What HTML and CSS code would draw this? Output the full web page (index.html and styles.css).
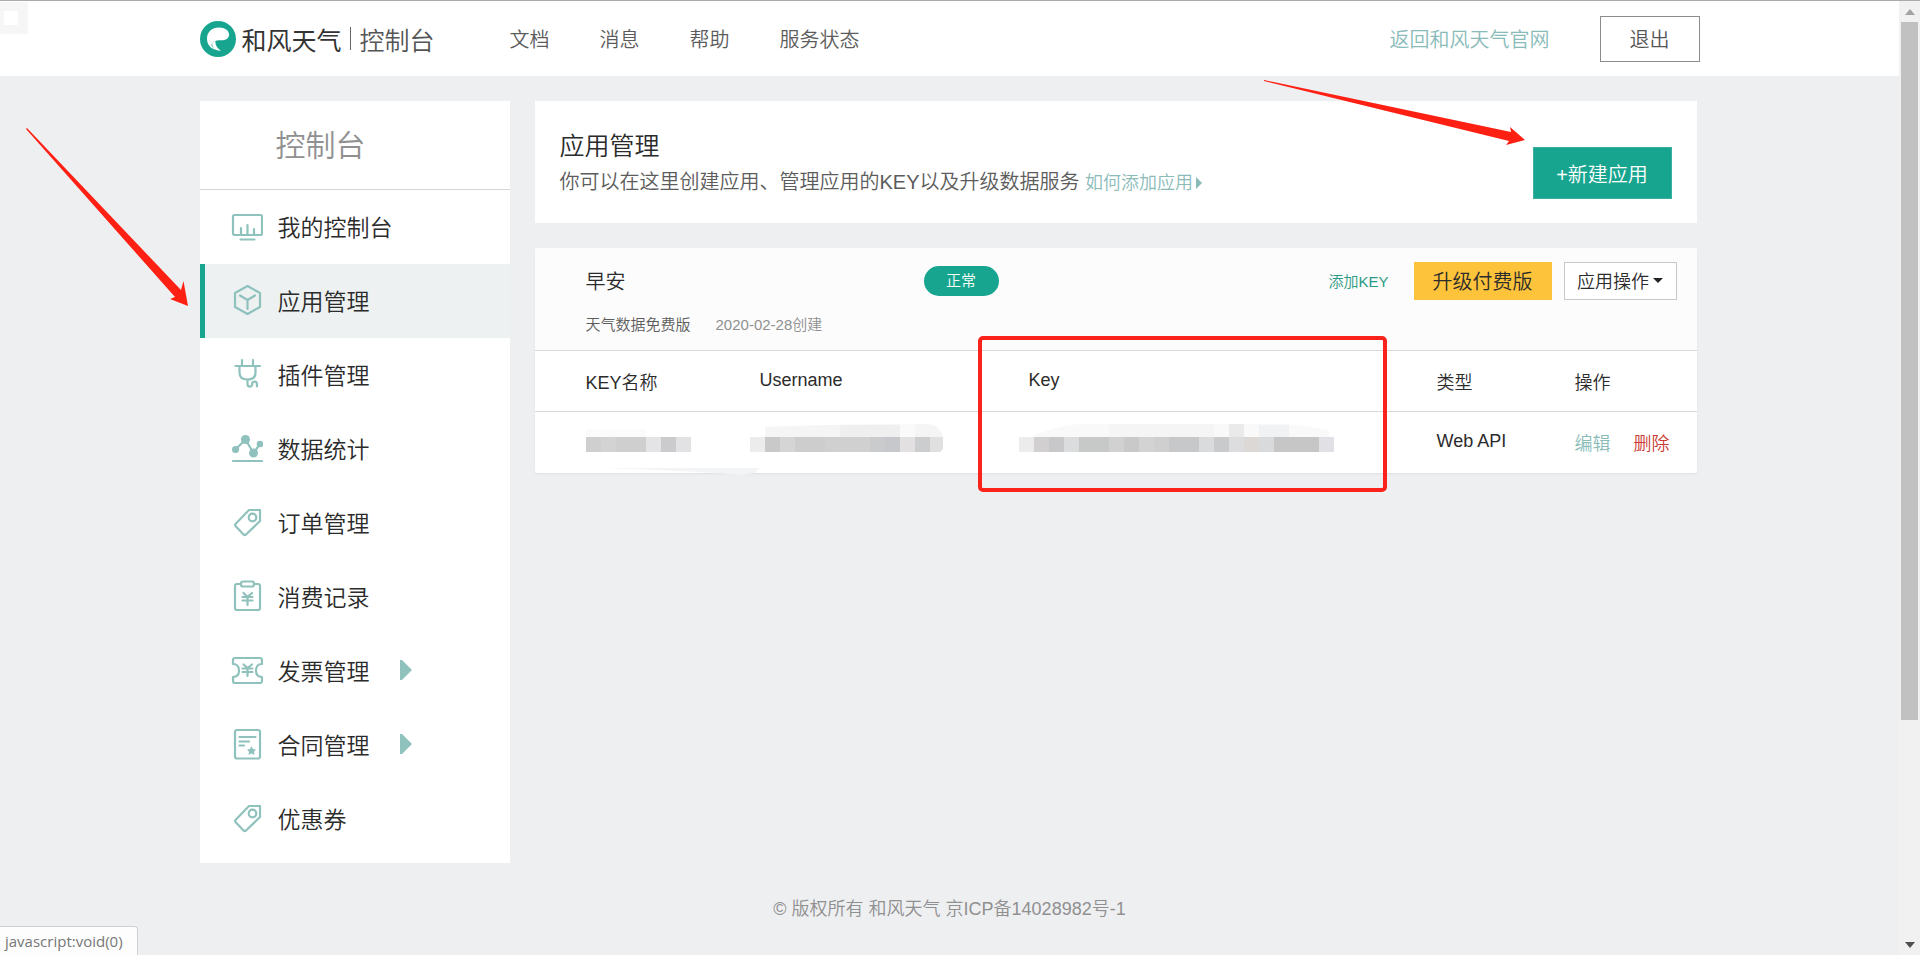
FILE: index.html
```html
<!DOCTYPE html>
<html lang="zh-CN">
<head>
<meta charset="utf-8">
<title>应用管理 - 和风天气控制台</title>
<link rel="stylesheet" href="styles.css">
</head>
<body>
<div class="window">
  <div class="page">
    <header class="topbar">
      <div class="container topbar-inner">
        <a class="brand" href="#">
          <svg class="brand-mark" viewBox="0 0 36 36" aria-hidden="true">
            <circle cx="18" cy="18" r="18" fill="#18a590"/>
            <path d="M17 29C11 28 7 24 7 17.500C7 11 12 6.500 19 6.500C25 6.500 29 9.500 29 13.500C29 17.500 26 19.300 21 19.300C15 19.300 11.500 21 11.500 24.500C12.500 26.500 14.500 28.300 17 29Z" fill="#fff"/>
            <path d="M12.500 25C11.500 21.500 13 20.300 15.500 20.200C15 24 17.500 27.500 21 29.600C17 30 13.500 28 12.500 25Z" fill="#fff"/>
          </svg>
          <span class="brand-name">和风天气</span>
          <span class="brand-bar"></span>
          <span class="brand-sub">控制台</span>
        </a>
        <nav class="topnav">
          <a href="#">文档</a>
          <a href="#">消息</a>
          <a href="#">帮助</a>
          <a href="#">服务状态</a>
        </nav>
        <a class="home-link" href="#">返回和风天气官网</a>
        <button class="logout" type="button">退出</button>
      </div>
    </header>

    <div class="container body-row">
      <aside class="sidebar">
        <h2 class="side-title">控制台</h2>
        <nav class="side-nav">
          <a class="side-item" href="#">
            <svg class="icon" viewBox="0 0 32 32"><rect x="2" y="5" width="29" height="20" rx="1.500"/><path d="M10 24V18M16.500 24V15M23 24V19M9.500 29.500H23.500"/></svg>
            <span>我的控制台</span>
          </a>
          <a class="side-item active" href="#">
            <svg class="icon" viewBox="0 0 32 32"><path d="M16.500 2L29 9V23L16.500 30L4 23V9ZM9 11.500L16.500 16L24 11.500M16.500 16V25"/></svg>
            <span>应用管理</span>
          </a>
          <a class="side-item" href="#">
            <svg class="icon" viewBox="0 0 32 32"><path d="M11 2V8M22 2V8M4.500 8H29M8.500 8V14.500C8.500 19 11.500 21.500 16.500 21.500S24.500 19 24.500 14.500V8M16.500 21.500V26C16.500 29.500 21 29.500 21 26.500C21 23 25.500 22.500 26 26V28.500"/></svg>
            <span>插件管理</span>
          </a>
          <a class="side-item" href="#">
            <svg class="icon" viewBox="0 0 32 32"><path d="M4.500 17.500L14.500 7.500L22.500 21L29 12M2 29H31"/><g class="solid"><circle cx="4.500" cy="17.500" r="3.500"/><circle cx="14.500" cy="7.500" r="4.500"/><circle cx="22.500" cy="21" r="4.500"/><circle cx="29" cy="12" r="3.300"/></g></svg>
            <span>数据统计</span>
          </a>
          <a class="side-item" href="#">
            <svg class="icon" viewBox="0 0 32 32"><path d="M18 4H29V15L15 28.500Q13.500 29.500 12.500 28.500L4.500 20Q3.500 19 4.500 18Z"/><circle cx="21.500" cy="11.500" r="3.800"/></svg>
            <span>订单管理</span>
          </a>
          <a class="side-item" href="#">
            <svg class="icon" viewBox="0 0 32 32"><path d="M10 4H6Q4 4 4 6V28Q4 30 6 30H27Q29 30 29 28V6Q29 4 27 4H23"/><rect x="10" y="1.500" width="13" height="5" rx="2"/><path d="M12.500 13L16.500 17L21 13M11.500 17H21.500M11.500 20.500H21.500M16.500 17V25"/></svg>
            <span>消费记录</span>
          </a>
          <a class="side-item" href="#">
            <svg class="icon" viewBox="0 0 32 32"><path d="M4 4H29Q31 4 31 6V10C26.500 10 25 13 25 16.500S26.500 23 31 23V27Q31 29 29 29H4Q2 29 2 27V23C6.500 23 8 20 8 16.500S6.500 10 2 10V6Q2 4 4 4Z"/><path d="M12.500 10.500L16.500 14L21 10.500M11.500 14.500H21.500M11.500 18H21.500M16.500 14V22"/></svg>
            <span>发票管理</span>
            <svg class="expand" viewBox="0 0 12 20"><path d="M0 0H2L12 10L2 20H0Z"/></svg>
          </a>
          <a class="side-item" href="#">
            <svg class="icon" viewBox="0 0 32 32"><rect x="4" y="2" width="25" height="28.500" rx="2"/><path d="M8.500 9H24.500M8.500 13.500H18M8.500 17.500H13"/><path class="solid" d="M20.500 18L22 21L25 21.500L23 23.700L23.500 27L20.500 25.500L17.500 27L18 23.700L16 21.500L19 21Z"/></svg>
            <span>合同管理</span>
            <svg class="expand" viewBox="0 0 12 20"><path d="M0 0H2L12 10L2 20H0Z"/></svg>
          </a>
          <a class="side-item" href="#">
            <svg class="icon" viewBox="0 0 32 32"><path d="M18 4H29V15L15 28.500Q13.500 29.500 12.500 28.500L4.500 20Q3.500 19 4.500 18Z"/><circle cx="21.500" cy="11.500" r="3.800"/></svg>
            <span>优惠券</span>
          </a>
        </nav>
      </aside>

      <main class="main">
        <section class="card intro">
          <div>
            <h1>应用管理</h1>
            <p>你可以在这里创建应用、管理应用的KEY以及升级数据服务 <a class="help" href="#">如何添加应用<svg class="help-arrow" viewBox="0 0 6 12"><path d="M0 0L6 6L0 12Z"/></svg></a></p>
          </div>
          <button class="create" type="button">+新建应用</button>
        </section>

        <section class="card app">
          <div class="app-head">
            <div class="app-row">
              <h3>早安</h3>
              <span class="status">正常</span>
              <div class="app-actions">
                <a class="add-key" href="#">添加KEY</a>
                <button class="upgrade" type="button">升级付费版</button>
                <button class="ops" type="button">应用操作<svg class="caret" viewBox="0 0 10 5"><path d="M0 0H10L5 5Z"/></svg></button>
              </div>
            </div>
            <div class="app-meta"><span>天气数据免费版</span><span class="date">2020-02-28创建</span></div>
          </div>
          <table class="keys">
            <colgroup><col class="c-name"><col class="c-user"><col><col class="c-type"><col class="c-ops"></colgroup>
            <thead>
              <tr><th scope="col">KEY名称</th><th scope="col">Username</th><th scope="col">Key</th><th scope="col">类型</th><th scope="col">操作</th></tr>
            </thead>
            <tbody>
              <tr>
                <td class="masked">
                  <svg class="mosaic first" width="105" height="28" role="img" aria-label="已隐藏">
                    <path fill="#fbfbfb" d="M0 5H60V13H0z"/>
                    <path fill="#cfcfd0" d="M0 13h15v15H0z"/><path fill="#d4d3d4" d="M15 13h15v15H15z"/><path fill="#cfcfd0" d="M30 13h30v15H30z"/><path fill="#e4e3e5" d="M60 13h15v15H60z"/><path fill="#cbcacc" d="M75 13h15v15H75z"/><path fill="#e2e1e3" d="M90 13h15v15H90z"/>
                  </svg>
                </td>
                <td class="masked">
                  <svg class="mosaic" width="193" height="28" role="img" aria-label="已隐藏">
                    <path fill="#f5f5f6" d="M15 3Q80 0 178 0Q191 2 193 13H15z"/><path fill="#efeff0" d="M90 1h60v12H90z"/><path fill="#fafafa" d="M150 0h15v13h-15z"/>
                    <path fill="#ececed" d="M0 13h15v15H0z"/><path fill="#c9c9ca" d="M15 13h15v15H15z"/><path fill="#d5d5d6" d="M30 13h15v15H30z"/><path fill="#cdcdce" d="M45 13h30v15H45z"/><path fill="#d1d0d1" d="M75 13h45v15H75z"/><path fill="#cacbcc" d="M120 13h15v15h-15z"/><path fill="#c7c8cb" d="M135 13h15v15h-15z"/><path fill="#e3e0e2" d="M150 13h15v15h-15z"/><path fill="#cccdce" d="M165 13h15v15h-15z"/><path fill="#e0e0e1" d="M180 13h13v12l-3 3h-10z"/>
                  </svg>
                </td>
                <td class="masked">
                  <svg class="mosaic" width="315" height="28" role="img" aria-label="已隐藏">
                    <path fill="#f9f9fa" d="M15 11Q35 3 60 0H270L310 6V13H15z"/><path fill="#f5f5f5" d="M90 0h105v13H90z"/><path fill="#eaeaeb" d="M210 0h15v13h-15z"/><path fill="#f1f2f4" d="M240 1h30v12h-30z"/>
                    <path fill="#ececec" d="M0 13h15v15H0z"/><path fill="#d1cfcf" d="M15 13h15v15H15z"/><path fill="#c8c8ca" d="M30 13h15v15H30z"/><path fill="#dbdcde" d="M45 13h15v15H45z"/><path fill="#c7c8c8" d="M60 13h30v15H60z"/><path fill="#d1d1d1" d="M90 13h15v15H90z"/><path fill="#c9c9ca" d="M105 13h15v15h-15z"/><path fill="#d4d3d4" d="M120 13h15v15h-15z"/><path fill="#cfcfcf" d="M135 13h15v15h-15z"/><path fill="#c7c8c9" d="M150 13h30v15h-30z"/><path fill="#dadbdd" d="M180 13h15v15h-15z"/><path fill="#c9cacb" d="M195 13h15v15h-15z"/><path fill="#dddcde" d="M210 13h15v15h-15z"/><path fill="#dcd8d6" d="M225 13h15v15h-15z"/><path fill="#d8dadc" d="M240 13h15v15h-15z"/><path fill="#c6c6c7" d="M255 13h45v15h-45z"/><path fill="#e1e1e5" d="M300 13h15v15h-15z"/>
                  </svg>
                </td>
                <td>Web API</td>
                <td class="row-ops"><a class="edit" href="#">编辑</a><a class="remove" href="#">删除</a></td>
              </tr>
            </tbody>
          </table>
        </section>
      </main>
    </div>

    <footer class="footer">© 版权所有 和风天气 京ICP备14028982号-1</footer>
  </div>

  <div class="scrollbar" aria-hidden="true">
    <svg class="sb-arrow" viewBox="0 0 10 6"><path d="M0 6L5 0L10 6Z" fill="#a3a3a3"/></svg>
    <div class="sb-track"><div class="sb-thumb"></div></div>
    <svg class="sb-arrow" viewBox="0 0 10 6"><path d="M0 0H10L5 6Z" fill="#505050"/></svg>
  </div>

  <div class="corner-badge"></div>
  <div class="link-status">javascript:void(0)</div>
  <svg class="note note-smudge" width="160" height="9" viewBox="0 0 160 9" aria-hidden="true"><path d="M0 1H158L154 6L140 8Q80 3 0 1Z" fill="#f3f4f6"/></svg>
  <svg class="note note-menu" width="164" height="180" viewBox="0 0 164 180" aria-hidden="true"><path d="M0 1L1 0L155 162L157.500 153L162 178L144 171L149 169Z"/></svg>
  <svg class="note note-create" width="262" height="68" viewBox="0 0 262 68" aria-hidden="true"><path d="M0 0L247 52L246 47L261 60L242 65L245 61L0 1Z"/></svg>
  <div class="note note-box"></div>
</div>
</body>
</html>
```
FILE: styles.css
```css
* { box-sizing: border-box; }

body {
  margin: 0;
  background: #eeeff1;
  color: #2b2b2b;
  font-family: "Liberation Sans", "Noto Sans CJK SC", sans-serif;
  font-size: 18px;
  font-weight: 350;
}

a { color: inherit; text-decoration: none; }
button { font: inherit; color: inherit; padding: 0; cursor: pointer; }
h1, h2, h3, p { margin: 0; font-weight: 350; }

.window {
  position: relative;
  display: flex;
  min-height: 100vh;
  border-top: 1px solid #aaa;
  border-bottom: 1px solid #d9d9d9;
}

.page { flex: 1; min-width: 0; }

.container { max-width: 1500px; margin: 0 auto; }

/* Top bar */
.topbar { background: #fff; }
.topbar-inner { display: flex; align-items: center; height: 75px; font-size: 20px; color: #5c5c5c; }
.brand { display: flex; align-items: center; width: 310px; font-size: 25px; color: #555; }
.brand-mark { width: 36px; height: 36px; margin-right: 6px; }
.brand-name { color: #333; font-weight: 400; }
.brand-bar { width: 1px; height: 23px; margin: 0 9px 0 8px; background: #666; }
.topnav { display: flex; gap: 50px; }
.home-link { margin-left: auto; color: #8abbb9; }
.logout {
  width: 100px;
  height: 46px;
  margin-left: 50px;
  border: 1px solid #8c8c8c;
  background: #fff;
  color: #555;
}

/* Body */
.body-row { display: flex; align-items: flex-start; gap: 25px; padding: 25px 3px 0 0; }

.sidebar { width: 310px; padding-bottom: 7px; background: #fff; }
.side-title {
  height: 89px;
  padding-left: 76px;
  border-bottom: 1px solid #d5d5d5;
  font-size: 30px;
  line-height: 90px;
  color: #909090;
}
.side-item {
  display: flex;
  align-items: center;
  height: 74px;
  padding: 0 0 3px 31px;
  font-size: 23px;
}
.side-item.active { padding-left: 26px; border-left: 5px solid #18a590; background: #edf1f1; }
.icon {
  width: 32px;
  height: 32px;
  margin-right: 15px;
  fill: none;
  stroke: #8fc1bd;
  stroke-width: 2.2;
  stroke-linecap: round;
  stroke-linejoin: round;
}
.icon .solid { fill: #8fc1bd; stroke: none; }
.expand { width: 12px; height: 20px; margin-left: 30px; fill: #8fc1bd; }

.main { flex: 1; min-width: 0; display: grid; gap: 25px; }
.card { background: #fff; }

.intro { display: flex; justify-content: space-between; height: 122px; padding: 26px 25px 0; }
.intro h1 { font-size: 25px; line-height: 38px; }
.intro p { font-size: 20px; line-height: 34px; color: #5c5c5c; }
.help { font-size: 18px; color: #8abbb9; }
.help-arrow { width: 6px; height: 12px; margin-left: 3px; fill: #8abbb9; }
.create {
  width: 139px;
  height: 52px;
  margin-top: 20px;
  border: 1px solid #3cb09e;
  background: #18a590;
  color: #fff;
  font-size: 20px;
}

/* Application card */
.app { border-radius: 3px; box-shadow: 0 1px 2px #dedfe1; }
.app-head { height: 102px; padding: 14px 20px 0 51px; background: #fcfcfc; }
.app-row { display: grid; grid-template-columns: 338px 75px 1fr; align-items: center; height: 38px; }
.app-row h3 { padding-bottom: 2px; font-size: 20px; }
.status {
  height: 30px;
  border-radius: 15px;
  background: #18a590;
  color: #fff;
  font-size: 15px;
  line-height: 30px;
  text-align: center;
}
.app-actions { display: flex; align-items: center; justify-content: flex-end; }
.add-key { padding-bottom: 2px; font-size: 15px; color: #2b9a84; }
.upgrade {
  width: 138px;
  height: 38px;
  margin: 0 12px 0 25px;
  padding-bottom: 2px;
  border: 0;
  background: #fdc33b;
  font-size: 20px;
}
.ops {
  display: flex;
  align-items: center;
  justify-content: center;
  width: 113px;
  height: 38px;
  padding-bottom: 2px;
  border: 1px solid #c8c8c8;
  background: #fff;
}
.caret { width: 10px; height: 5px; margin-left: 4px; fill: #222; }
.app-meta { display: flex; gap: 25px; margin-top: 14px; font-size: 15px; line-height: 22px; color: #5c5c5c; }
.date { color: #909090; }

.keys { width: 100%; table-layout: fixed; border-collapse: collapse; }
.c-name { width: 225px; }
.c-user { width: 269px; }
.c-type { width: 138px; }
.c-ops { width: 122px; }
.keys th, .keys td {
  height: 61px;
  padding: 0 0 1px;
  border-top: 1px solid #d9d9d9;
  font-weight: 350;
  text-align: left;
}
.keys th:first-child, .keys td:first-child { padding-left: 51px; }
.keys .masked { padding-top: 12px; vertical-align: top; }
.mosaic { display: block; margin-left: -10px; }
.mosaic.first { margin-left: 0; }
.edit { color: #8abbb9; }
.remove { margin-left: 23px; color: #cb3a32; }

.footer { padding: 33px 0; text-align: center; line-height: 26px; color: #909090; }

/* Scroll bar */
.scrollbar { display: flex; flex-direction: column; align-items: center; width: 21px; background: #f1f1f1; }
.sb-arrow { width: 10px; height: 6px; margin: 8px 0 7px; }
.sb-track { flex: 1; width: 17px; }
.sb-thumb { height: 76.5%; background: #c1c1c1; }

/* Overlays */
.corner-badge {
  position: absolute;
  left: 0;
  top: 1px;
  width: 28px;
  height: 32px;
  border: solid #f6f6f6;
  border-width: 9px 10px 9px 4px;
  background: #fff;
}
.link-status {
  position: absolute;
  left: 0;
  bottom: 0;
  width: 138px;
  height: 29px;
  padding-left: 5px;
  border: solid #d0d0d0;
  border-width: 1px 1px 0 0;
  border-radius: 0 4px 0 0;
  background: #fdfdfd;
  color: #777;
  font-family: "Open Sans", sans-serif;
  font-size: 15px;
  font-weight: 400;
  line-height: 29px;
}
.note { position: absolute; fill: #ff2014; }
.note-smudge { left: 601px; top: 466px; }
.note-menu { left: 26px; top: 127px; }
.note-create { left: 1264px; top: 79px; }
.note-box { left: 978px; top: 335px; width: 409px; height: 156px; border: 4px solid #fa231c; border-radius: 5px; }
```
